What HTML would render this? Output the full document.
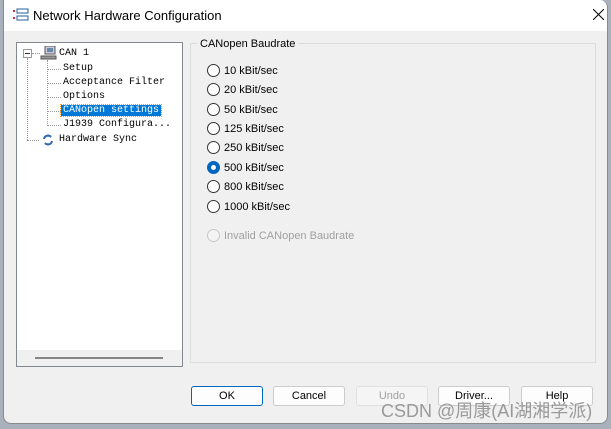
<!DOCTYPE html>
<html><head><style>
*{margin:0;padding:0;box-sizing:border-box}
body{width:611px;height:429px;background:#a9b1bd;position:relative;overflow:hidden;font-family:"Liberation Sans",sans-serif}
.win{position:absolute;left:3px;top:0;width:605px;height:424px;background:#f0f0f0;border:1px solid #8a8a8a;border-top:none;border-radius:0 8px 8px 8px;overflow:hidden}
.title{position:absolute;left:0;top:0;width:100%;height:31px;background:#fff;font-size:13px;color:#000}
.title span{position:absolute;left:29px;top:8px}
.tree{position:absolute;left:12px;top:42px;width:167px;height:325px;background:#fff;border:1px solid #828790}
.t{position:absolute;font-family:"Liberation Mono",monospace;font-size:10px;color:#000;white-space:nowrap;margin-top:2px}
.sel{background:#0078d7;color:#fff;outline:1px dotted #f90}
.dot{position:absolute;border-color:#999;border-style:dotted;border-width:0}
.grp{position:absolute;left:186px;top:43px;width:406px;height:320px;border:1px solid #dcdcdc}
.lg{position:absolute;left:193px;top:38px;background:#f0f0f0;font-size:11px;padding:0 3px;color:#000}
.r{position:absolute;left:203px;font-size:11px;color:#000;height:14px;line-height:14px;padding-left:17px}
.r:before{content:"";position:absolute;left:0;top:0;width:13px;height:13px;border:1px solid #333;border-radius:50%;background:#fff;box-sizing:border-box}
.r.on:before{border:4px solid #0067c0;background:#fff}
.r.dis{color:#a0a0a0}.r.dis:before{border-color:#c8c8c8;background:#f4f4f4}
.b{position:absolute;top:386px;width:72px;height:20px;border:1px solid #ccc;border-radius:3px;background:#fdfdfd;font-size:11px;text-align:center;line-height:18px;color:#000}
</style></head><body>
<div class="win">
<div class="title">
<svg style="position:absolute;left:9px;top:8px" width="16" height="14"><rect x="4" y="1" width="11" height="4" fill="#fff" stroke="#2060a0"/><rect x="4" y="8" width="11" height="4" fill="#fff" stroke="#2060a0"/><rect x="0" y="2" width="2" height="2" fill="#c33"/><rect x="0" y="9" width="2" height="2" fill="#c33"/></svg>
<span>Network Hardware Configuration</span>
<svg style="position:absolute;left:589px;top:9px" width="11" height="11"><path d="M0 0L11 11M11 0L0 11" stroke="#000" stroke-width="1"/></svg>
</div>
<div class="tree">
<div style="position:absolute;left:6px;top:6px;width:9px;height:9px;border:1px solid #999;background:#fff"><div style="position:absolute;left:1px;top:3px;width:5px;height:1px;background:#333"></div></div>
<div class="dot" style="left:10px;top:15px;height:82px;border-left-width:1px"></div>
<div class="dot" style="left:10px;top:97px;width:12px;border-top-width:1px"></div>
<div class="dot" style="left:15px;top:10px;width:8px;border-top-width:1px"></div>
<div class="dot" style="left:30px;top:17px;height:66px;border-left-width:1px"></div>
<div class="dot" style="left:30px;top:26px;width:14px;border-top-width:1px"></div>
<div class="dot" style="left:30px;top:40px;width:14px;border-top-width:1px"></div>
<div class="dot" style="left:30px;top:54px;width:14px;border-top-width:1px"></div>
<div class="dot" style="left:30px;top:68px;width:14px;border-top-width:1px"></div>
<div class="dot" style="left:30px;top:82px;width:14px;border-top-width:1px"></div>
<svg style="position:absolute;left:23px;top:3px" width="17" height="15"><rect x="5" y="0" width="10" height="8" fill="#ccd" stroke="#555"/><rect x="7" y="2" width="6" height="4" fill="#68a"/><rect x="1" y="10" width="15" height="3" fill="#999" stroke="#555"/></svg>
<div class="t" style="left:42px;top:3px">CAN 1</div>
<div class="t" style="left:46px;top:18px">Setup</div>
<div class="t" style="left:46px;top:32px">Acceptance Filter</div>
<div class="t" style="left:46px;top:46px">Options</div>
<div class="t sel" style="left:44px;top:60px;padding:0 2px">CANopen settings</div>
<div class="t" style="left:46px;top:74px">J1939 Configura...</div>
<svg style="position:absolute;left:25px;top:91px" width="12" height="12"><path d="M2 5A4 4 0 0 1 9 3M10 7A4 4 0 0 1 3 9" stroke="#2a6ab0" stroke-width="2" fill="none"/></svg>
<div class="t" style="left:42px;top:89px">Hardware Sync</div>
<div style="position:absolute;left:0;bottom:0;width:165px;height:16px;background:#f0f0f0"><div style="position:absolute;left:18px;top:7px;width:128px;height:2px;background:#858585"></div></div>
</div>
<div class="grp"></div>
<div class="lg">CANopen Baudrate</div>
<div class="r" style="top:64px">10 kBit/sec</div>
<div class="r" style="top:83px">20 kBit/sec</div>
<div class="r" style="top:103px">50 kBit/sec</div>
<div class="r" style="top:122px">125 kBit/sec</div>
<div class="r" style="top:141px">250 kBit/sec</div>
<div class="r on" style="top:161px">500 kBit/sec</div>
<div class="r" style="top:180px">800 kBit/sec</div>
<div class="r" style="top:200px">1000 kBit/sec</div>
<div class="r dis" style="top:229px">Invalid CANopen Baudrate</div>
<div class="b" style="left:187px;border:1px solid #0067c0">OK</div>
<div class="b" style="left:269px">Cancel</div>
<div class="b" style="left:352px;color:#a0a0a0;background:#f5f5f5;border-color:#e0e0e0">Undo</div>
<div class="b" style="left:434px">Driver...</div>
<div class="b" style="left:517px">Help</div>
<div style="position:absolute;left:377px;top:397px;font-size:18px;color:#9a9a9a;font-family:'Liberation Sans','Noto Sans CJK SC',sans-serif;white-space:nowrap">CSDN @周康(AI湖湘学派)</div>
</div>
</body></html>
